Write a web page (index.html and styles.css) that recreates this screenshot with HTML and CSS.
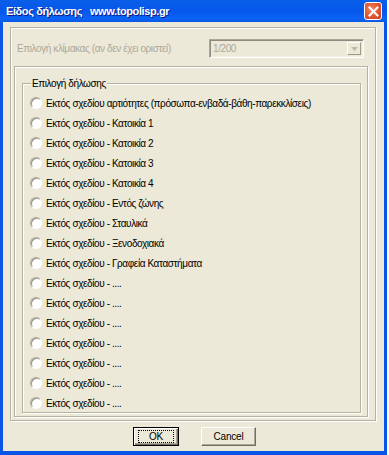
FILE: index.html
```html
<!DOCTYPE html>
<html lang="el">
<head>
    <meta charset="UTF-8">
    <title>Είδος δήλωσης</title>
    <link rel="stylesheet" href="styles.css">
</head>
<body>

<div class="window">
    <div class="titlebar">
        <span class="title">Είδος δήλωσης&nbsp;&nbsp;&nbsp;www.topolisp.gr</span>
        <span class="close">
            <svg width="11" height="11" viewBox="0 0 11 11">
                <path d="M1.5 1.5 L9.5 9.5 M9.5 1.5 L1.5 9.5" stroke="#fff" stroke-width="2" stroke-linecap="square"/>
            </svg>
        </span>
    </div>

    <div class="client">
        <div class="frame frame-outer">
            <div class="scale-row">
                <span class="disabled-text">Επιλογή κλίμακας (αν δεν έχει οριστεί)</span>
                <div class="combo">
                    <span class="combo-value">1/200</span>
                    <span class="combo-button">
                        <svg width="7" height="4" viewBox="0 0 7 4"><path d="M0 0 H7 L3.5 4 Z" fill="#bdbaac"/></svg>
                    </span>
                </div>
            </div>

            <div class="frame frame-inner">
                <fieldset class="group">
                    <legend>Επιλογή δήλωσης</legend>
                    <label class="option"><span class="radio"></span>Εκτός σχεδίου αρτιότητες (πρόσωπα-ενβαδά-βάθη-παρεκκλίσεις)</label>
                    <label class="option"><span class="radio"></span>Εκτός σχεδίου - Κατοικία 1</label>
                    <label class="option"><span class="radio"></span>Εκτός σχεδίου - Κατοικία 2</label>
                    <label class="option"><span class="radio"></span>Εκτός σχεδίου - Κατοικία 3</label>
                    <label class="option"><span class="radio"></span>Εκτός σχεδίου - Κατοικία 4</label>
                    <label class="option"><span class="radio"></span>Εκτός σχεδίου - Εντός ζώνης</label>
                    <label class="option"><span class="radio"></span>Εκτός σχεδίου - Σταυλικά</label>
                    <label class="option"><span class="radio"></span>Εκτός σχεδίου - Ξενοδοχιακά</label>
                    <label class="option"><span class="radio"></span>Εκτός σχεδίου - Γραφεία Καταστήματα</label>
                    <label class="option"><span class="radio"></span>Εκτός σχεδίου - ....</label>
                    <label class="option"><span class="radio"></span>Εκτός σχεδίου - ....</label>
                    <label class="option"><span class="radio"></span>Εκτός σχεδίου - ....</label>
                    <label class="option"><span class="radio"></span>Εκτός σχεδίου - ....</label>
                    <label class="option"><span class="radio"></span>Εκτός σχεδίου - ....</label>
                    <label class="option"><span class="radio"></span>Εκτός σχεδίου - ....</label>
                    <label class="option"><span class="radio"></span>Εκτός σχεδίου - ....</label>
                </fieldset>
            </div>
        </div>

        <div class="buttons">
            <button class="btn btn-default"><span class="focus">OK</span></button>
            <button class="btn">Cancel</button>
        </div>
    </div>
</div>

</body>
</html>
```

FILE: styles.css
```css
body {
    margin: 0;
    background: #ffffff;
    font-family: 'Liberation Sans', Arial, sans-serif;
    font-size: 10px;
    letter-spacing: -0.4px;
}

.window {
    width: 387px;
    height: 455px;
    box-sizing: border-box;
    padding: 0 3px 4px 3px;
    background: #0a55e6;
    display: flex;
    flex-direction: column;
}

.titlebar {
    height: 22px;
    margin: 0 -3px;
    padding: 0 5px 0 6px;
    background: linear-gradient(to bottom, #0a5fe8 0%, #0656ea 50%, #0a64f5 85%, #0a58e4 100%);
    display: flex;
    align-items: center;
    justify-content: space-between;
}

.title {
    color: #ffffff;
    font-weight: bold;
    font-size: 11px;
    letter-spacing: -0.4px;
    text-shadow: 1px 1px 0 #0a1883;
    white-space: nowrap;
}

.close {
    width: 18px;
    height: 18px;
    box-sizing: border-box;
    border: 1px solid #ffffff;
    border-radius: 3px;
    background: radial-gradient(circle at 40% 40%, #f08a6a 0%, #e0542e 55%, #c83c18 100%);
    display: flex;
    align-items: center;
    justify-content: center;
}

.client {
    flex: 1;
    background: #ece9d8;
    display: flex;
    flex-direction: column;
}

/* etched 3d frame: grey line, white line one pixel down-right */
.frame {
    border: 1px solid #b5b2a4;
    box-shadow: inset 1px 1px 0 #ffffff, 1px 1px 0 #ffffff;
    box-sizing: border-box;
}

.frame-outer {
    margin: 5px 0 0 7px;
    width: 366px;
    height: 394px;
}

.scale-row {
    display: flex;
    align-items: center;
    justify-content: space-between;
    margin-top: 11px;
    padding: 0 11px 0 6px;
}

.disabled-text {
    color: #aca899;
}

.combo {
    width: 155px;
    height: 19px;
    box-sizing: border-box;
    border: 1px solid;
    border-color: #aca899 #ffffff #ffffff #aca899;
    box-shadow: inset 1px 1px 0 #8d8b80, inset -1px -1px 0 #f1efe2;
    display: flex;
    align-items: center;
    justify-content: space-between;
    padding: 0 2px 0 3px;
}

.combo-value {
    color: #aca899;
}

.combo-button {
    width: 14px;
    height: 13px;
    box-sizing: border-box;
    border: 1px solid;
    border-color: #ffffff #9d9a8c #9d9a8c #ffffff;
    display: flex;
    align-items: center;
    justify-content: center;
}

.frame-inner {
    margin: 8px 0 0 3px;
    width: 354px;
    height: 351px;
}

.group {
    margin: 11px 0 0 7px;
    padding: 4px 0 0 7px;
    width: 339px;
    height: 335px;
    box-sizing: border-box;
    border: 1px solid #b5b2a4;
    box-shadow: inset 1px 1px 0 #ffffff, 1px 1px 0 #ffffff;
}

.group legend {
    padding: 0 1px;
    margin-left: 1px;
    background: #ece9d8;
    color: #000000;
}

.option {
    display: flex;
    align-items: center;
    gap: 4px;
    height: 20px;
    color: #000000;
    white-space: nowrap;
}

.radio {
    width: 12px;
    height: 12px;
    box-sizing: border-box;
    border-radius: 50%;
    border: 1px solid;
    border-color: #aca899 #ffffff #ffffff #aca899;
    background: #ffffff;
    box-shadow: inset 1px 1px 0 #9d9a8c;
    flex-shrink: 0;
}

.buttons {
    display: flex;
    gap: 22px;
    margin-top: 6px;
    padding-left: 130px;
}

.btn {
    height: 19px;
    width: 55px;
    box-sizing: border-box;
    padding: 0;
    font-family: 'Liberation Sans', Arial, sans-serif;
    font-size: 10px;
    letter-spacing: -0.2px;
    color: #000000;
    background: #ece9d8;
    border: 1px solid;
    border-color: #ffffff #716f64 #716f64 #ffffff;
    box-shadow: inset -1px -1px 0 #aca899;
}

.btn-default {
    width: 46px;
    border: 1px solid #000000;
    box-shadow: inset 1px 1px 0 #ffffff, inset -1px -1px 0 #716f64, inset -2px -2px 0 #aca899;
}

.focus {
    display: inline-block;
    width: 34px;
    line-height: 11px;
    border: 1px dotted #000000;
}
```
